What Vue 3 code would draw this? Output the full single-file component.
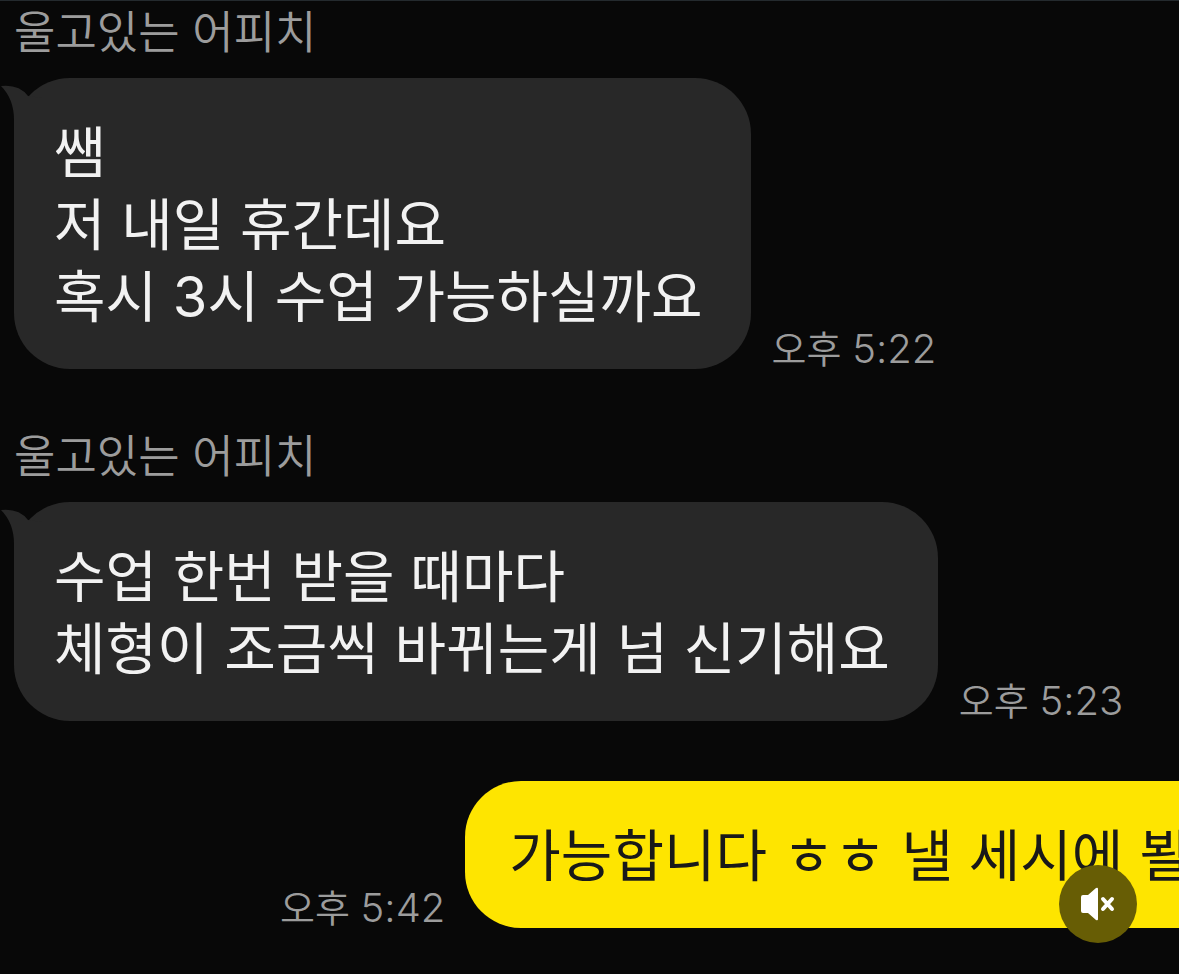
<script setup>
const messages = [
  { id: 1, sender: '울고있는 어피치', lines: ['쌤', '저 내일 휴간데요', '혹시 3시 수업 가능하실까요'], time: '5:22' },
  { id: 2, sender: '울고있는 어피치', lines: ['수업 한번 받을 때마다', '체형이 조금씩 바뀌는게 넘 신기해요'], time: '5:23' },
]
</script>

<template>
  <main class="chat">
    <article v-for="m in messages" :key="m.id" class="received">
      <h2 class="sender">{{ m.sender }}</h2>
      <div class="row">
        <div class="bubble">
          <svg class="tail" viewBox="0 0 42 60" aria-hidden="true"><path d="M1 8Q19 6 28 18L42 20V60H14V42Q14 21 1 8Z" /></svg>
          <p v-for="line in m.lines" :key="line" class="line">{{ line }}</p>
        </div>
        <time class="time">오후 <span class="clock">{{ m.time }}</span></time>
      </div>
    </article>
    <article class="row sent">
      <time class="time">오후 <span class="clock">5:42</span></time>
      <div class="bubble mine"><p class="line">가능합니다 ㅎㅎ 낼 세시에 뵐</p></div>
    </article>
    <button class="mute" type="button" aria-label="음소거 해제">
      <svg viewBox="0 0 78 78" aria-hidden="true">
        <path d="M24 30h5l8-7q2-1 2 1v30q0 2-2 1l-8-7h-5q-2 0-2-2V32q0-2 2-2Z" fill="#fff" />
        <path d="M44 34l9 10M53 34l-9 10" stroke="#fff" stroke-width="4" stroke-linecap="round" />
      </svg>
    </button>
  </main>
</template>

<style>
body { margin: 0; background: #080808; }
</style>

<style scoped>
.chat {
  position: relative;
  box-sizing: border-box;
  min-height: 100vh;
  padding-top: 2px;
  overflow: hidden;
  background: #080808;
  border-top: 1px solid #242a2e;
  font-family: Inter, "Noto Sans CJK KR", sans-serif;
  color: #f2f2f2;
}
.received { margin-bottom: 58px; }
.sender {
  margin: 0 0 15px 14px;
  font-size: 45px;
  line-height: 60px;
  font-weight: 350;
  color: #9c9c9c;
}
.row { display: flex; align-items: flex-end; gap: 21px; }
.bubble {
  position: relative;
  flex: none;
  margin-left: 14px;
  padding: 39px 48px 36px 40px;
  border-radius: 56px;
  background: #282828;
}
.line { margin: 0; font-size: 56px; line-height: 72px; white-space: nowrap; }
.time { font-size: 38px; line-height: 40px; color: #9c9c9c; white-space: nowrap; font-weight: 350; }
.clock { font-size: 40px; }
.tail { position: absolute; left: -14px; top: 0; width: 42px; height: 60px; fill: #282828; }
.sent { margin-top: 60px; margin-left: 280px; gap: 20px; }
.mine { margin: 0; padding-left: 44px; background: #fee500; color: #191919; }
.mute {
  position: absolute;
  right: 42px;
  bottom: 31px;
  width: 78px;
  height: 78px;
  padding: 0;
  border: 0;
  border-radius: 50%;
  background: #675d05;
}
.mute svg { display: block; width: 78px; height: 78px; }
</style>
